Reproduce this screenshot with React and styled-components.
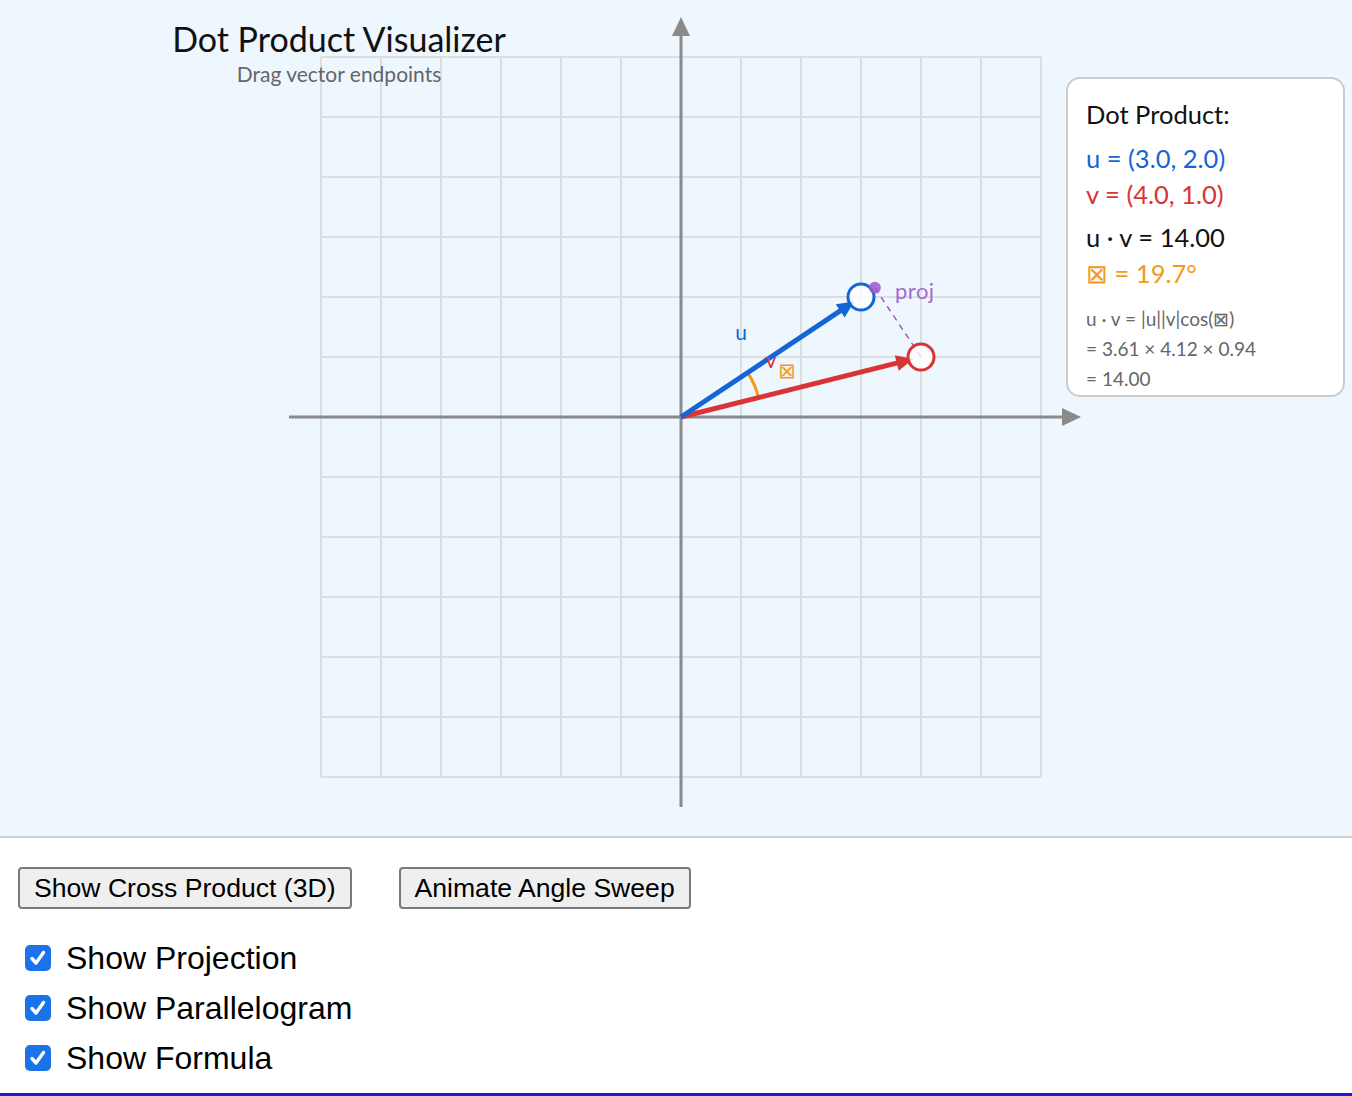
import React, { useState } from 'react';
import styled, { createGlobalStyle } from 'styled-components';

const GlobalStyle = createGlobalStyle`
  html, body {
    margin: 0;
    padding: 0;
    background: #ffffff;
  }
`;

const SCALE = 60;
const ORIGIN = { x: 681, y: 417 };
const U = { x: 3, y: 2 };
const V = { x: 4, y: 1 };

const BLUE = '#1466d6';
const RED = '#d93434';
const ORANGE = '#f39a1e';
const PURPLE = '#9a5ac8';
const AXIS = '#8a8a8a';
const GRID = '#dedede';

const Page = styled.div`
  display: flex;
  flex-direction: column;
  height: 1093px;
  overflow: hidden;
  border-bottom: 3px solid #1c1cd4;
`;

const Stage = styled.div`
  position: relative;
  height: 836px;
  flex-shrink: 0;
  background: #eef6fe;
  border-bottom: 2px solid #cfcfcf;
  font-family: Lato, 'Open Sans', sans-serif;
`;

const Plot = styled.svg`
  display: block;
`;

const Heading = styled.div`
  position: absolute;
  left: 139px;
  top: 18px;
  width: 400px;
  display: flex;
  flex-direction: column;
  align-items: center;
`;

const Title = styled.h1`
  margin: 0;
  font-size: 34px;
  font-weight: 400;
  color: #111;
  line-height: 42px;
`;

const Subtitle = styled.div`
  font-size: 21px;
  color: #666;
  line-height: 26px;
  margin-top: 1px;
`;

const InfoCard = styled.div`
  position: absolute;
  left: 1066px;
  top: 77px;
  width: 279px;
  height: 320px;
  box-sizing: border-box;
  padding: 17px 18px;
  background: #fff;
  border: 2px solid #cccccc;
  border-radius: 14px;
  display: flex;
  flex-direction: column;
`;

const CardLine = styled.div`
  font-size: ${(p) => (p.$small ? '19px' : '25.5px')};
  line-height: ${(p) => (p.$small ? '30px' : '36px')};
  color: ${(p) => p.$color || '#111'};
  margin-top: ${(p) => p.$gap || 0}px;
  white-space: nowrap;
`;

const Controls = styled.div`
  display: flex;
  flex-direction: column;
  padding: 29px 18px 0;
  font-family: 'Liberation Sans', Arial, sans-serif;
`;

const ButtonRow = styled.div`
  display: flex;
  gap: 47px;
  margin-bottom: 24px;
`;

const Button = styled.button`
  font-family: 'Liberation Sans', Arial, sans-serif;
  font-size: 26.6px;
  height: 42px;
  padding: 0 14px;
  color: #000;
  background: #efefef;
  border: 2px solid #7a7a7a;
  border-radius: 4px;
  cursor: pointer;
`;

const CheckRow = styled.label`
  display: flex;
  align-items: center;
  gap: 15px;
  height: 50px;
  padding-left: 7px;
  font-size: 32px;
  color: #000;
  cursor: pointer;
`;

const Box = styled.span`
  width: 26px;
  height: 26px;
  border-radius: 5px;
  background: ${(p) => (p.$on ? '#1a73e8' : '#fff')};
  border: ${(p) => (p.$on ? 'none' : '2px solid #767676')};
  box-sizing: border-box;
  display: flex;
  align-items: center;
  justify-content: center;
  flex-shrink: 0;
`;

const px = (p) => ({ x: ORIGIN.x + p.x * SCALE, y: ORIGIN.y - p.y * SCALE });

function Arrow({ vec, color }) {
  const end = px(vec);
  const len = Math.hypot(end.x - ORIGIN.x, end.y - ORIGIN.y);
  const dx = (end.x - ORIGIN.x) / len;
  const dy = (end.y - ORIGIN.y) / len;
  const tip = { x: ORIGIN.x + dx * (len - 8), y: ORIGIN.y + dy * (len - 8) };
  const base = { x: tip.x - dx * 17, y: tip.y - dy * 17 };
  const nx = -dy;
  const ny = dx;
  const head = `${tip.x},${tip.y} ${base.x + nx * 8},${base.y + ny * 8} ${base.x - nx * 8},${base.y - ny * 8}`;
  return (
    <g>
      <line x1={ORIGIN.x} y1={ORIGIN.y} x2={base.x + dx * 4} y2={base.y + dy * 4} stroke={color} strokeWidth="5" />
      <polygon points={head} fill={color} />
      <circle cx={end.x} cy={end.y} r="13" fill="rgba(255,255,255,0.8)" stroke={color} strokeWidth="3" />
    </g>
  );
}

function Graph() {
  const lines = [];
  for (let i = 0; i <= 12; i++) {
    const p = 321 + i * 60;
    lines.push(<line key={`v${i}`} x1={p} y1={57} x2={p} y2={777} stroke={GRID} strokeWidth="2" />);
    lines.push(<line key={`h${i}`} x1={321} y1={p - 264} x2={1041} y2={p - 264} stroke={GRID} strokeWidth="2" />);
  }

  const au = Math.atan2(U.y, U.x);
  const av = Math.atan2(V.y, V.x);
  const r = 80;
  const arcStart = { x: ORIGIN.x + r * Math.cos(av), y: ORIGIN.y - r * Math.sin(av) };
  const arcEnd = { x: ORIGIN.x + r * Math.cos(au), y: ORIGIN.y - r * Math.sin(au) };
  const mid = (au + av) / 2;
  const lbl = { x: ORIGIN.x + 116 * Math.cos(mid), y: ORIGIN.y - 116 * Math.sin(mid) };

  const k = (U.x * V.x + U.y * V.y) / (U.x * U.x + U.y * U.y);
  const proj = px({ x: U.x * k, y: U.y * k });
  const vEnd = px(V);

  return (
    <Plot width="1352" height="836" viewBox="0 0 1352 836">
      {lines}
      <line x1="289" y1={ORIGIN.y} x2="1064" y2={ORIGIN.y} stroke={AXIS} strokeWidth="3" />
      <polygon points="1081,417 1062,408 1062,426" fill={AXIS} />
      <line x1={ORIGIN.x} y1="807" x2={ORIGIN.x} y2="34" stroke={AXIS} strokeWidth="3" />
      <polygon points="681,17 672,36 690,36" fill={AXIS} />

      <path
        d={`M ${arcStart.x} ${arcStart.y} A ${r} ${r} 0 0 0 ${arcEnd.x} ${arcEnd.y}`}
        fill="none"
        stroke={ORANGE}
        strokeWidth="3"
      />

      <line x1={vEnd.x} y1={vEnd.y} x2={proj.x} y2={proj.y} stroke={PURPLE} strokeWidth="1.5" strokeDasharray="6 5" />

      <Arrow vec={V} color={RED} />
      <Arrow vec={U} color={BLUE} />

      <circle cx={proj.x} cy={proj.y} r="6" fill={PURPLE} opacity="0.85" />

      <text x="741" y="340" fill={BLUE} fontSize="21" textAnchor="middle" fontFamily="Lato, sans-serif">u</text>
      <text x="771" y="368" fill={RED} fontSize="21" textAnchor="middle" fontFamily="Lato, sans-serif">v</text>
      <text x={lbl.x} y={lbl.y + 8} fill={ORANGE} fontSize="21" textAnchor="middle" fontFamily="'DejaVu Sans', sans-serif">⊠</text>
      <text x="895" y="299" fill="#a36bd0" fontSize="22" letterSpacing="0.5" fontFamily="Lato, sans-serif">proj</text>
    </Plot>
  );
}

export default function App() {
  const [checks, setChecks] = useState({ projection: true, parallelogram: true, formula: true });
  const toggle = (key) => setChecks((c) => ({ ...c, [key]: !c[key] }));

  const options = [
    ['projection', 'Show Projection'],
    ['parallelogram', 'Show Parallelogram'],
    ['formula', 'Show Formula'],
  ];

  return (
    <Page>
      <GlobalStyle />
      <Stage>
        <Graph />
        <Heading>
          <Title>Dot Product Visualizer</Title>
          <Subtitle>Drag vector endpoints</Subtitle>
        </Heading>
        <InfoCard>
          <CardLine>Dot Product:</CardLine>
          <CardLine $color={BLUE} $gap={8}>u = (3.0, 2.0)</CardLine>
          <CardLine $color={RED}>v = (4.0, 1.0)</CardLine>
          <CardLine $gap={7}>u · v = 14.00</CardLine>
          <CardLine $color={ORANGE}>⊠ = 19.7°</CardLine>
          <CardLine $small $color="#666" $gap={13}>u · v = |u||v|cos(⊠)</CardLine>
          <CardLine $small $color="#666">= 3.61 × 4.12 × 0.94</CardLine>
          <CardLine $small $color="#666">= 14.00</CardLine>
        </InfoCard>
      </Stage>
      <Controls>
        <ButtonRow>
          <Button>Show Cross Product (3D)</Button>
          <Button>Animate Angle Sweep</Button>
        </ButtonRow>
        {options.map(([key, label]) => (
          <CheckRow key={key} onClick={() => toggle(key)}>
            <Box $on={checks[key]}>
              {checks[key] && (
                <svg width="26" height="26" viewBox="0 0 26 26">
                  <path d="M7 13.5 L11 18 L18.5 7.5" fill="none" stroke="#fff" strokeWidth="3.4" strokeLinecap="round" strokeLinejoin="round" />
                </svg>
              )}
            </Box>
            {label}
          </CheckRow>
        ))}
      </Controls>
    </Page>
  );
}
